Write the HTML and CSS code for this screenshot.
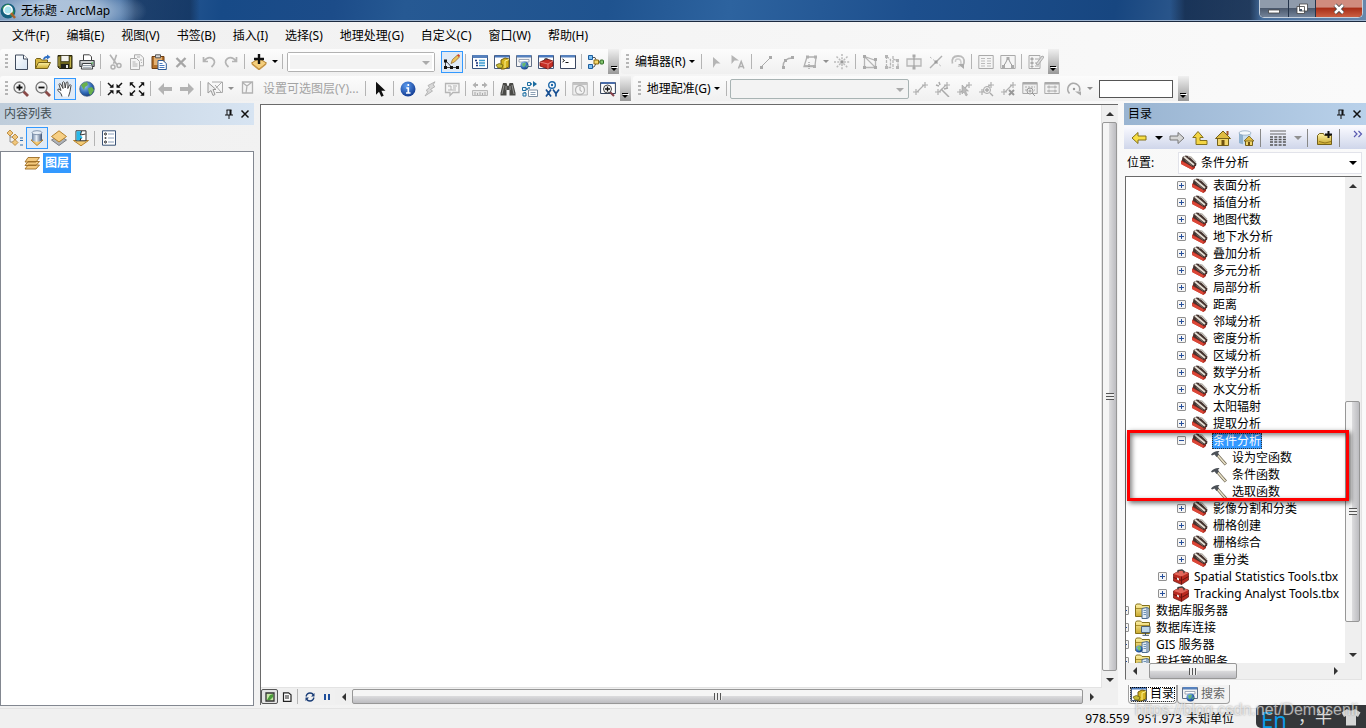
FILE: index.html
```html
<!DOCTYPE html>
<html lang="zh-CN">
<head>
<meta charset="utf-8">
<title>无标题 - ArcMap</title>
<link rel="stylesheet" href="styles.css">
</head>
<body>
<svg class="sprite" aria-hidden="true">
  <defs>
    <linearGradient id="g-gold" x1="0" y1="0" x2="0" y2="1"><stop offset="0" stop-color="#fff3a8"/><stop offset="1" stop-color="#c9a82c"/></linearGradient>
    <linearGradient id="g-page" x1="0" y1="0" x2="1" y2="1"><stop offset="0" stop-color="#fff"/><stop offset="1" stop-color="#d3e2f2"/></linearGradient>
    <linearGradient id="g-cyl" x1="0" y1="0" x2="1" y2="0"><stop offset="0" stop-color="#6d84a4"/><stop offset=".45" stop-color="#e6eef8"/><stop offset="1" stop-color="#3d5274"/></linearGradient>
    <radialGradient id="g-blue" cx=".4" cy=".3" r=".8"><stop offset="0" stop-color="#5b9cf0"/><stop offset="1" stop-color="#0a2f86"/></radialGradient>
    <radialGradient id="g-globe" cx=".35" cy=".3" r=".8"><stop offset="0" stop-color="#9cc8f4"/><stop offset=".6" stop-color="#2c66b4"/><stop offset="1" stop-color="#12346e"/></radialGradient>
  </defs>
  <symbol id="app" viewBox="0 0 16 16"><circle cx="8" cy="8" r="7.500" fill="#15607e"/><path d="M2 5q3-4 7-4 1 3-2 4l-3 4zM10 10l4-3q1 4-3 7z" fill="#2f8f4e"/><circle cx="8" cy="7" r="4.200" fill="#a8e4ee" stroke="#fff" stroke-width="1.400"/><path d="M11 10l4 5" stroke="#a8622c" stroke-width="2.400"/></symbol>
  <symbol id="new" viewBox="0 0 16 16"><path d="M2.500 1h8l4 4v10.500h-12z" fill="url(#g-page)" stroke="#3f4a5c"/><path d="M10.500 1v4h4" fill="#fff" stroke="#3f4a5c"/></symbol>
  <symbol id="open" viewBox="0 0 16 16"><path d="M.5 14.500V5.500l1-1h4l1 1.500h6V8" fill="#d8b840" stroke="#75611a"/><path d="M.5 14.500l3-6h12l-3 6z" fill="url(#g-gold)" stroke="#75611a"/><path d="M8 5q1-3 4-3V.5l3.500 2.500-3.500 2.500V4q-2 0-3 2z" fill="#2e6fc4"/></symbol>
  <symbol id="save" viewBox="0 0 16 16"><path d="M1 1.500h14v13H2.500L1 13z" fill="#6d651e" stroke="#29240c"/><path d="M4 1.500h8v6H4z" fill="#f3f3ee" stroke="#29240c" stroke-width=".6"/><path d="M4 10h8v4.500H4z" fill="#23231c"/><path d="M9 11h2v3H9z" fill="#e8e8e8"/><path d="M2 3v9M13.500 3v10" stroke="#c2b34c"/></symbol>
  <symbol id="print" viewBox="0 0 16 16"><path d="M4.500 6V.8h6l2 2V6" fill="#fff" stroke="#444"/><path d="M.8 6.500h14.400v6H.8z" fill="#a9aeb2" stroke="#3b3f42"/><path d="M2 8h12" stroke="#eee"/><path d="M3.500 9.500h9l1.200 5.500H2.300z" fill="#fff" stroke="#3b3f42"/><path d="M4 11.500h8M4 13.300h8" stroke="#7b8a99" stroke-width=".8"/><path d="M12.500 9h1.500" stroke="#3c3"/></symbol>
  <symbol id="cut" viewBox="0 0 16 16"><path d="M3 .8l7 10M9.500.8l-3 9" stroke="#b2b2b2" stroke-width="1.600" fill="none"/><circle cx="6" cy="13" r="2" fill="none" stroke="#b2b2b2" stroke-width="1.500"/><circle cx="12" cy="11.500" r="2" fill="none" stroke="#b2b2b2" stroke-width="1.500"/></symbol>
  <symbol id="copy" viewBox="0 0 16 16"><path d="M5.500.8h6l3 3v8h-9z" fill="#f3f3f3" stroke="#aaa"/><path d="M1.500 4.500h6l3 3v8h-9z" fill="#f3f3f3" stroke="#aaa"/><path d="M3.500 8h3M3.500 10h5M3.500 12h5M8 3h3M11 6h2M12 8.500h1" stroke="#b2b2b2"/></symbol>
  <symbol id="paste" viewBox="0 0 16 16"><path d="M1 2.500h12v12H1z" fill="#b5722c" stroke="#6e3d10"/><path d="M3 3h8v8H3z" fill="#e3b072"/><path d="M4.500.8h5v3h-5z" fill="#d9d9d9" stroke="#555"/><path d="M7 6.500h5l3.300 3v6H7z" fill="#fff" stroke="#2c5a94"/><path d="M8.500 9.500h3M8.500 11.500h5M8.500 13.500h5" stroke="#4a7cc0"/></symbol>
  <symbol id="del" viewBox="0 0 16 16"><path d="M3.500 4l9 9M12.500 4l-9 9" stroke="#a6a6a6" stroke-width="2.400"/></symbol>
  <symbol id="undo" viewBox="0 0 16 16"><path d="M2.500 3v4.500H7M3 7q4-5 8.500-2.500Q16 8 10.500 13" fill="none" stroke="#b4b4b4" stroke-width="1.700"/></symbol>
  <symbol id="redo" viewBox="0 0 16 16"><path d="M13.500 3v4.500H9M13 7q-4-5-8.500-2.500Q0 8 5.500 13" fill="none" stroke="#b4b4b4" stroke-width="1.700"/></symbol>
  <symbol id="adddata" viewBox="0 0 16 16"><path d="M.5 9L8 4.500 15.500 9 8 15.500z" fill="#f4ce7c" stroke="#b5812c"/><path d="M1 10l7 5.500L15 10" fill="none" stroke="#c79648" stroke-width="1.500"/><path d="M8 0v10M3 5h10" stroke="#111" stroke-width="2.400"/></symbol>
  <symbol id="edit" viewBox="0 0 16 16"><path d="M1.500 7v6.500h12M2 7l5.500 6" fill="none" stroke="#333" stroke-width=".9"/><path d="M0 5.500h3v3H0zM0 12h3v3H0zM6 12h3v3H6zM12 12h3v3h-3z" fill="#111"/><path d="M7 9.500l1.500-4 5-4.500 2 2-5 5z" fill="#efc35a" stroke="#87632a" stroke-width=".7"/><path d="M13 1.500L14.500 0 16 1.500 15 3z" fill="#d0442c"/></symbol>
  <symbol id="toc" viewBox="0 0 16 16"><path d="M.5 1.500h15v13H.5z" fill="#fff" stroke="#36527f"/><path d="M.5 1h15v3H.5z" fill="#5681bd"/><path d="M3 6.500h2M4 9h2M4 11.500h2" stroke="#16327c" stroke-width="1.500"/><path d="M7 6.500h6M7 9h6M7 11.500h6" stroke="#3d9ad0" stroke-width="1.300"/></symbol>
  <symbol id="catalog" viewBox="0 0 16 16"><path d="M.5 1.500h15v13H.5z" fill="#fff" stroke="#46587a"/><path d="M1 1.500h14v2H1z" fill="#4978bd"/><path d="M7 6l4-2 4 1v8l-5 2H7z" fill="#d5b421" stroke="#715b0a"/><path d="M11 7l4-1.500M11 7v7" stroke="#fff38d"/><path d="M2 11q3-3 7 0l-1 3H4z" fill="#c6bb35" stroke="#5f560f" stroke-width=".7"/></symbol>
  <symbol id="search" viewBox="0 0 16 16"><path d="M.5 1.500h15v11H.5z" fill="#f4f4f4" stroke="#637086"/><path d="M1 1h14v2.500H1z" fill="#5681bd"/><path d="M3 5.500h10v2.500H3z" fill="#fff" stroke="#8b96a6" stroke-width=".8"/><circle cx="8.500" cy="11.500" r="4" fill="url(#g-globe)"/><path d="M6 9.500l4-1-1 3.500-2 1zM10 12l2-1-1 3z" fill="#65b76c"/></symbol>
  <symbol id="toolboxwin" viewBox="0 0 16 16"><path d="M.5 1.500h15v13H.5z" fill="#fff" stroke="#46587a"/><path d="M1 1h14v2.500H1z" fill="#4978bd"/><path d="M2 8l7-3 6 2v5l-5 3-8-3z" fill="#c52f26" stroke="#6b120d" stroke-width=".8"/><path d="M2 8l8 2 5-3M10 10v5" fill="none" stroke="#f0968f" stroke-width=".8"/><path d="M6 5.500q2-2 4 0" fill="none" stroke="#333"/></symbol>
  <symbol id="python" viewBox="0 0 16 16"><path d="M.5 1.500h15v13H.5z" fill="#fff" stroke="#3a4660"/><path d="M1 1h14v2.500H1z" fill="#5681bd"/><path d="M2.500 5l2 1.500-2 1.500M5.500 8.500h3" fill="none" stroke="#111"/></symbol>
  <symbol id="model" viewBox="0 0 16 16"><path d="M4 3.500h3l2 4.500h3M4 13h2l3-5" fill="none" stroke="#555"/><path d="M.5 1.500h4v4h-4zM.5 10.500h4v4h-4z" fill="#7fc2f4" stroke="#1d5d9c"/><path d="M6 6h4.500v4H6z" fill="#f5d76a" stroke="#8c6a14"/><rect x="12" y="6" width="3.500" height="4" rx="1" fill="#84c470" stroke="#2f6a22"/></symbol>
  <symbol id="zoomin" viewBox="0 0 16 16"><path d="M10 10l5 5" stroke="#8a4a48" stroke-width="2.800"/><circle cx="6.500" cy="6.500" r="5.500" fill="#f2f2f2" stroke="#777" stroke-width="1.300"/><path d="M6.500 3.500v6M3.500 6.500h6" stroke="#111" stroke-width="1.800"/></symbol>
  <symbol id="zoomout" viewBox="0 0 16 16"><path d="M10 10l5 5" stroke="#8a4a48" stroke-width="2.800"/><circle cx="6.500" cy="6.500" r="5.500" fill="#f2f2f2" stroke="#777" stroke-width="1.300"/><path d="M3.500 6.500h6" stroke="#111" stroke-width="1.800"/></symbol>
  <symbol id="pan" viewBox="0 0 16 16"><path d="M5 15.500L4 12.500.8 9.500Q.3 8 2 8l2 1.500L2 3.500Q2.500 2 3.600 3L6 7.500 5.500 1.500Q6.500 0 7.500 1.500l.7 5.500 1-5.500q1-1.200 1.800 0L10.800 7.500 12.500 4q1-.8 1.500.3L13 10.500l-1.500 5" fill="#fff" stroke="#333" stroke-width=".9"/></symbol>
  <symbol id="globe" viewBox="0 0 16 16"><circle cx="8" cy="8" r="7.300" fill="url(#g-globe)" stroke="#3c5a84" stroke-width=".7"/><path d="M2 4q3-3 6-3l1 3-3 2-1 3zM9 7l4-1 2 3-3 5-2-1z" fill="#69b04c"/></symbol>
  <symbol id="fixin" viewBox="0 0 16 16"><path d="M1 2l4 4M15 2l-4 4M1 14l4-4M15 14l-4-4" stroke="#111" stroke-width="1.500"/><path d="M6.500 6.800H2.500l4-4zM9.500 6.800v-4l4 4zM6.500 9.200v4l-4-4zM9.500 9.200h4l-4 4z" fill="#111"/></symbol>
  <symbol id="fixout" viewBox="0 0 16 16"><path d="M2 2.500l4 4M14 2.500l-4 4M2 13.500l4-4M14 13.500l-4-4" stroke="#111" stroke-width="1.500"/><path d="M.8 1.300h4l-4 4zM15.200 1.300v4l-4-4zM.8 14.700v-4l4 4zM15.200 14.700h-4l4-4z" fill="#111"/></symbol>
  <symbol id="back" viewBox="0 0 16 16"><path d="M1 8l6-6v4h8v4H7v4z" fill="#b3b3b3"/></symbol>
  <symbol id="fwd" viewBox="0 0 16 16"><path d="M15 8L9 2v4H1v4h8v4z" fill="#b3b3b3"/></symbol>
  <symbol id="selfeat" viewBox="0 0 16 16"><path d="M5 1h10.500v10.500H9M9 7l6-6M8 4l6 7" fill="none" stroke="#aaa"/><path d="M1 1.500l8 7H6l2 5-2 1-2-5-3 2.500z" fill="#eee" stroke="#999"/></symbol>
  <symbol id="clearsel" viewBox="0 0 16 16"><path d="M3.500 1h10v11h-10zM4 2l4 3 5-4M8 5l-1 7" fill="#f4f4f4" stroke="#b2b2b2" stroke-width="1.300"/></symbol>
  <symbol id="arrow" viewBox="0 0 16 16"><path d="M4 .8v13l3-3 2.300 5 2.400-1-2.300-5H13.500z" fill="#111"/></symbol>
  <symbol id="info" viewBox="0 0 16 16"><circle cx="8" cy="8" r="7.500" fill="url(#g-blue)"/><path d="M8.300 3v2M6.300 7h2v5M6 12h4.500" fill="none" stroke="#fff" stroke-width="1.700"/></symbol>
  <symbol id="bolt" viewBox="0 0 16 16"><path d="M13 .8L6 4.500l1.500 2-3.500 3 2 1L3 15l7.500-5-2-1.500 4.500-3-2-1.500z" fill="#d8d8d8" stroke="#b0b0b0" stroke-width=".9"/></symbol>
  <symbol id="popup" viewBox="0 0 16 16"><path d="M1.500 2.500h13.500v9h-6l-3 3v-3h-4.500z" fill="#f6f6f6" stroke="#b5b5b5" stroke-width="1.300"/><path d="M4 5h3v4H4M9 5h4M9 7h3M7 9h5" fill="none" stroke="#b5b5b5"/></symbol>
  <symbol id="measure" viewBox="0 0 16 16"><path d="M.5 4L4 1v2h2v2H4v2zM15.500 4L12 1v2h-2v2h2v2z" fill="#b0b0b0"/><path d="M.5 9.500h15v5H.5z" fill="#e6e6e6" stroke="#b8b8b8"/><path d="M3 11v3M5.500 12v2M8 11v3M10.500 12v2M13 11v3" stroke="#aaa"/></symbol>
  <symbol id="find" viewBox="0 0 16 16"><path d="M3 2h3.500l1 3h1l1-3H13l2.500 10v2.500h-6V9h-3v5.500h-6V12z" fill="#4a4a46"/><path d="M4 4L2 13M12 4l2 9M6 5v4M10 5v4" stroke="#aaa" stroke-width=".8"/></symbol>
  <symbol id="route" viewBox="0 0 16 16"><path d="M3 13V8h4V3h6" fill="none" stroke="#1b6ca0" stroke-width="1.300" stroke-dasharray="2 1"/><path d="M11 0l4 3-4 3z" fill="#1b6ca0"/><path d="M.5 6.500H4v3H.5zM5.500 1.500h3v3h-3zM1 12h3v3H1z" fill="#eaf4fa" stroke="#1b6ca0"/><path d="M6.500 9h9v6.500h-9z" fill="#fff" stroke="#7c8ea0"/><path d="M8.500 11.500h5M8.500 13.500h5" stroke="#8ba0b5"/></symbol>
  <symbol id="xy" viewBox="0 0 16 16"><circle cx="8" cy="4" r="3.300" fill="#fff" stroke="#1d67a8" stroke-width="1.400"/><circle cx="8" cy="4" r="1.200" fill="#1d67a8"/><path d="M2 8.500l5 7M7 8.500l-5 7M9 8.500l3 4 3-4M12 12v3.500" fill="none" stroke="#174f92" stroke-width="1.700"/></symbol>
  <symbol id="time" viewBox="0 0 16 16"><path d="M.8 1.500h14.500v12.500H.8z" fill="#eee" stroke="#bbb"/><path d="M1 2h14v2H1z" fill="#c3c3c3"/><circle cx="8" cy="9" r="4.500" fill="#f4f4f4" stroke="#b6b6b6" stroke-width="1.300"/><path d="M8 6v3.500l2 1" fill="none" stroke="#aaa"/></symbol>
  <symbol id="viewer" viewBox="0 0 16 16"><path d="M.6 1.500h14.800v11H.6z" fill="#fff" stroke="#33415a"/><path d="M1 1h14v2H1z" fill="#4a6ca8"/><path d="M10 11l4 4" stroke="#85404a" stroke-width="2"/><circle cx="7.500" cy="8" r="4" fill="#f4f4f4" stroke="#444"/><path d="M7.500 5.500v5M5 8h5" stroke="#111" stroke-width="1.300"/></symbol>
  <symbol id="earrow" viewBox="0 0 16 16"><path d="M5 3v11l3-4.500h4.500z" fill="#b5b5b5"/></symbol>
  <symbol id="earrowa" viewBox="0 0 16 16"><path d="M1.500 1v9l3-3.500h4.500z" fill="#b5b5b5"/><path d="M8.500 14.500l2.700-7 2.700 7M9.500 12.500h3.500" fill="none" stroke="#b0b0b0" stroke-width="1.500"/></symbol>
  <symbol id="line" viewBox="0 0 16 16"><path d="M3 13L13 3" stroke="#aaa"/><path d="M2 12h3v3H2zM11 2h3v3h-3z" fill="#aaa"/></symbol>
  <symbol id="arc" viewBox="0 0 16 16"><path d="M3 13Q3 4 13 4" fill="none" stroke="#b0b0b0" stroke-width="1.300"/><path d="M2 12h3v3H2zM4 5h3v3H4zM11 2h3v3h-3z" fill="#aaa"/></symbol>
  <symbol id="trace" viewBox="0 0 16 16"><path d="M5 3h9l-1 9M5 3L2 12.500h9" fill="none" stroke="#b0b0b0" stroke-width="1.300"/><path d="M4 1.500h3v3H4zM12 1.500h3v3h-3zM11 11h3v3h-3z" fill="#b0b0b0"/><path d="M7 8v7M3.500 11.500h7" stroke="#888" stroke-dasharray="1 1"/></symbol>
  <symbol id="point" viewBox="0 0 16 16"><path d="M8 0v16M0 8h16M2.500 2.500l11 11M13.500 2.500l-11 11" stroke="#bbb" stroke-width="1.500" stroke-dasharray="2 1.300"/><path d="M6.500 6.500h3v3h-3z" fill="#999"/></symbol>
  <symbol id="vertices" viewBox="0 0 16 16"><path d="M2.500 2.500v11h11zM2.500 2.500l11 4v7" fill="none" stroke="#b6b6b6" stroke-width="1.300"/><path d="M1 1h3v3H1zM1 12h3v3H1zM12 12h3v3h-3zM12 4h3v3h-3z" fill="#aaa"/></symbol>
  <symbol id="reshape" viewBox="0 0 16 16"><path d="M2.500 2v12M2.500 2.500l4 3v8H2M9 2v13M9 5l5 2v6" fill="none" stroke="#b6b6b6" stroke-width="1.300" stroke-dasharray="3 1"/><path d="M1 1h3v3H1zM1 12h3v3H1zM12 5h3v3h-3zM12 12h3v3h-3z" fill="#b5b5b5"/></symbol>
  <symbol id="cutpoly" viewBox="0 0 16 16"><path d="M1 5h14v7H1z" fill="#eee" stroke="#b5b5b5" stroke-width="1.300"/><path d="M8 2v12" stroke="#999"/><path d="M6.500.500h3v3h-3zM6.500 12.500h3v3h-3z" fill="#aaa"/></symbol>
  <symbol id="split" viewBox="0 0 16 16"><path d="M2 14L14 2" stroke="#b0b0b0" stroke-width="1.400"/><path d="M2 3l12 10" stroke="#bbb" stroke-dasharray="2 2"/><path d="M6.500 6.500h3v3h-3z" fill="#999"/></symbol>
  <symbol id="rotate" viewBox="0 0 16 16"><path d="M2.500 9.500Q1 2 8 2t6 7l-2 4" fill="none" stroke="#bbb" stroke-width="1.800"/><path d="M5.500 8Q5 5 8 5t3 4-3 3" fill="none" stroke="#ccc" stroke-width="1.500"/><path d="M8 10h6v5z" fill="#aaa"/></symbol>
  <symbol id="attr" viewBox="0 0 16 16"><path d="M.8 1.500h14.400v13H.8z" fill="#f5f5f5" stroke="#aaa"/><path d="M3 4.500h4M3 7h4M3 9.500h4M3 12h4M9 4.500h4M9 7h4M9 9.500h4M9 12h4" stroke="#bbb"/></symbol>
  <symbol id="sketch" viewBox="0 0 16 16"><path d="M.8 1.500h14.400v13H.8z" fill="#f5f5f5" stroke="#aaa"/><path d="M3.500 12l2-3 2.500-5 2.500 5 2 3" fill="none" stroke="#999"/><path d="M2 11h3v3H2zM11 11h3v3h-3zM6.500 3h3v3h-3z" fill="#aaa"/></symbol>
  <symbol id="create" viewBox="0 0 16 16"><path d="M1 1.500h11v13H1z" fill="#f5f5f5" stroke="#aaa"/><path d="M3 4h2v2H3zM3 8h2v2H3zM3 12h2v1H3zM7 5h4M7 9h2M7 12h4" fill="#aaa" stroke="#aaa"/><path d="M8 10l6-8 2 1-6 8z" fill="#ddd" stroke="#aaa"/></symbol>
  <symbol id="link" viewBox="0 0 16 16"><path d="M1 11h6M4 8v6M10 4h6M13 1v6M5 11l7-7" fill="none" stroke="#b0b0b0" stroke-width="1.200"/></symbol>
  <symbol id="linkwand" viewBox="0 0 16 16"><use href="#link"/><path d="M7 8l8 8M2 4l3 1M5 1l1 3M10 8l4-1" stroke="#aaa" stroke-width="1.500"/></symbol>
  <symbol id="linksel" viewBox="0 0 16 16"><use href="#link"/><path d="M6 4v9l2-2 2 4 1.500-1-2-4h3z" fill="#bbb" stroke="#999" stroke-width=".5"/></symbol>
  <symbol id="linkzoom" viewBox="0 0 16 16"><use href="#link"/><circle cx="9" cy="9" r="3.500" fill="#eee" stroke="#aaa"/><path d="M12 12l3 3M7 9h4M9 7v4" stroke="#aaa" stroke-width="1.400"/></symbol>
  <symbol id="linkdel" viewBox="0 0 16 16"><use href="#link"/><path d="M9 9l5 5M14 9l-5 5" stroke="#999" stroke-width="2"/></symbol>
  <symbol id="table" viewBox="0 0 16 16"><path d="M.8 1.500h14.400v11H.8z" fill="#eee" stroke="#aaa"/><path d="M1 2.500h14" stroke="#aaa" stroke-width="2"/><path d="M3 6h10M3 9h10" stroke="#aaa" stroke-dasharray="2 1"/><circle cx="8" cy="10" r="3" fill="#eee" stroke="#999"/><path d="M10 12l3 3M6.500 10h3M8 8.500v3" stroke="#999"/></symbol>
  <symbol id="table2" viewBox="0 0 16 16"><path d="M.8 1.500h14.400v11H.8z" fill="#f1f1f1" stroke="#aaa"/><path d="M1 2.500h14" stroke="#aaa" stroke-width="2"/><path d="M3 6h10M3 10h10M5 4.500v3M11 4.500v3M5 8.500v3M11 8.500v3" stroke="#aaa"/></symbol>
  <symbol id="georot" viewBox="0 0 16 16"><path d="M3.500 12.500A6 6 0 1 1 13.500 10" fill="none" stroke="#aaa" stroke-width="1.700"/><circle cx="8" cy="8" r="1.200" fill="#999"/><path d="M9 10.500h6v4z" fill="#aaa"/></symbol>
  <symbol id="l-order" viewBox="0 0 16 16"><path d="M3 3v9h6M3 7h5" fill="none" stroke="#777" stroke-width=".8"/><path d="M0 3l3-3 3 3-3 3zM5 7l3-3 3 3-3 3zM5 12.500l3-3 3 3-3 3z" fill="#f1c77c" stroke="#b37e2f" stroke-width=".8"/><path d="M13 8h3M13 10.500h3M13 15h3" stroke="#2f6fb0"/></symbol>
  <symbol id="l-source" viewBox="0 0 16 16"><path d="M2 10l6 5.500 6-5.500z" fill="#f4cb74" stroke="#b5812c"/><path d="M3 2.500v8q5 2.500 10 0v-8z" fill="url(#g-cyl)"/><ellipse cx="8" cy="2.700" rx="5" ry="2" fill="#e7eef7" stroke="#5d7390" stroke-width=".7"/></symbol>
  <symbol id="l-vis" viewBox="0 0 16 16"><path d="M.5 10L8 5.500l7.500 4.500L8 15.500z" fill="#aeb2b8" stroke="#7c7f84"/><path d="M.5 6.500L8 .8l7.500 5.700L8 12z" fill="#f6cf84" stroke="#b5812c"/></symbol>
  <symbol id="l-sel" viewBox="0 0 16 16"><path d="M.5 10.500h15L8 15.800z" fill="#f4cb74" stroke="#b5812c"/><path d="M3 .8h10v10H3z" fill="#fff" stroke="#333"/><path d="M3.500 1.300h5l-1 4 2 2-2 3h-4z" fill="#29b8e8"/><path d="M8.500 1l-1 4 5-1M8 8l-1 3" stroke="#333" fill="none"/></symbol>
  <symbol id="l-opt" viewBox="0 0 16 16"><path d="M1.500.8h13v14.400h-13z" fill="#fff" stroke="#3b5478"/><circle cx="4.500" cy="4" r="1" fill="none" stroke="#222"/><circle cx="4.500" cy="8" r="1" fill="#444"/><circle cx="4.500" cy="12" r="1" fill="none" stroke="#222"/><path d="M7 4h6M7 8h6M7 12h6" stroke="#8da1bb"/></symbol>
  <symbol id="layers" viewBox="0 0 16 16"><path d="M1 14l3-4h11.500l-3.500 4zM1 10.500l3-4h11.500L12 10.500zM1 7l3-4.500h11.500L12 7z" fill="#f5ca7e" stroke="#9c6c24" stroke-width=".9"/></symbol>
  <symbol id="pin" viewBox="0 0 10 10"><path d="M2.500 1h5M3 1v5M1 6h8M5 6v4" fill="none" stroke="currentColor"/><path d="M6.500 1v5" stroke="currentColor" stroke-width="2"/></symbol>
  <symbol id="close" viewBox="0 0 10 10"><path d="M1.500 1.500l7 7M8.500 1.500l-7 7" stroke="currentColor" stroke-width="1.500"/></symbol>
  <symbol id="c-back" viewBox="0 0 16 16"><path d="M1 8l6-5.500V6h8v4H7v3.500z" fill="#f8df45" stroke="#84701a"/></symbol>
  <symbol id="c-fwd" viewBox="0 0 16 16"><path d="M15 8L9 2.500V6H1v4h8v3.500z" fill="#d6d6d6" stroke="#777"/></symbol>
  <symbol id="c-up" viewBox="0 0 16 16"><path d="M6 1.500L.8 7.500H4v7h11v-4H8v-3h3.200z" fill="#f3d544" stroke="#84701a"/></symbol>
  <symbol id="c-home" viewBox="0 0 16 16"><path d="M2.500 8h11v7.500h-11z" fill="#f1d56a" stroke="#75611a"/><path d="M11.500 1h2v4h-2z" fill="#a0522d"/><path d="M.5 8.500L8 1l7.500 7.500z" fill="#dfbb43" stroke="#75611a"/><path d="M6.500 10h3v5.500h-3z" fill="#6e5110"/></symbol>
  <symbol id="c-db" viewBox="0 0 16 16"><path d="M1 3v10q6 3 12 0V3z" fill="#c9dded"/><path d="M1 3v10q2 1 4 1.300V3z" fill="#8fb2cf"/><ellipse cx="7" cy="3" rx="6" ry="2.200" fill="#f3f8fc" stroke="#87a1b8" stroke-width=".7"/><path d="M7.500 10.500h7v5h-7z" fill="#f1d56a" stroke="#75611a"/><path d="M6 11l5-5 5 5z" fill="#dfbb43" stroke="#75611a" stroke-width=".8"/><path d="M10 12h2v3.500h-2z" fill="#6e5110"/></symbol>
  <symbol id="c-view" viewBox="0 0 16 16"><path d="M0 1h16M0 4h16" stroke="#666"/><path d="M0 7h16M0 9.500h16M0 12h16M0 15h16" stroke="#555" stroke-width="1.300" stroke-dasharray="3 1.300"/></symbol>
  <symbol id="c-conn" viewBox="0 0 16 16"><path d="M.5 14.500V5.500l2-2h4l1 2h7v9z" fill="url(#g-gold)" stroke="#75611a"/><path d="M2 11.500q6 3 12 0" fill="none" stroke="#94771a"/><path d="M11.500 1v7M8 4.500h7" stroke="#111" stroke-width="2"/></symbol>
  <symbol id="toolset" viewBox="0 0 16 16"><path d="M0 6l2.500-2L14 10.500V13l-2.500 2L.3 9z" fill="#a52a20"/><path d="M0 6l11.500 5.800V15L.3 9.200z" fill="#dc4636"/><path d="M.8 5.500L1.500 2l3-1.500 3 .5 8 7.500-.5 2.500-3.500 1z" fill="#45332f"/><path d="M3 1.800L13 10" stroke="#e4dfd4" stroke-width="1.800"/><path d="M7 1.500l3 .5 5 5.500" fill="none" stroke="#b3aea6" stroke-width="1.300"/><path d="M4.500 5.500l6.500 5" stroke="#7a6f68"/></symbol>
  <symbol id="toolbox" viewBox="0 0 16 16"><path d="M.5 5L7 1.500l8.500 2.500v7L8.500 15.500.5 12z" fill="#b92a20" stroke="#641510" stroke-width=".7"/><path d="M.5 5L7 1.500 15.500 4 8.500 7.500z" fill="#e2665a"/><path d="M8.500 7.500v8M.5 8.500l8 3 7-4" fill="none" stroke="#6b130e"/><path d="M5 3.500V1.500L9 .8l2 1.500v2" fill="none" stroke="#333" stroke-width="1.200"/><path d="M4 8.500l2 1v2l-2-1z" fill="#eee"/></symbol>
  <symbol id="hammer" viewBox="0 0 16 16"><path d="M6 4.500l8.800 10" stroke="#6e6653" stroke-width="3"/><path d="M6.500 5l8 9.200" stroke="#e9e2c8" stroke-width="1.600"/><path d="M0 4.500Q3 .5 8.500 1L7 3l1 1.500L5.500 7 3.500 4.500 1 5.500z" fill="#4c5157"/></symbol>
  <symbol id="folder" viewBox="0 0 16 16"><path d="M.5 13.500V2.500l1-1.500h4l1.500 1.500h7.500v11z" fill="url(#g-gold)" stroke="#84701a"/><path d="M1 5.500h13" stroke="#a98f2c"/></symbol>
  <symbol id="f-server" viewBox="0 0 16 16"><use href="#folder"/><path d="M7 5.500l5-1 2 1v9l-2 1H7z" fill="#e3edf6" stroke="#4e6d8e"/><path d="M12 5v10" stroke="#4e6d8e"/><path d="M8.500 7.500H11M8.500 9.500H11M8.500 11.500H11" stroke="#6f94b8"/></symbol>
  <symbol id="f-conn" viewBox="0 0 16 16"><use href="#folder"/><path d="M6.500 6.500h8.500v6H6.500z" fill="#bcd6ea" stroke="#4e6072"/><path d="M10.500 13v2M7.500 15.300h6.500" stroke="#3e4f60"/></symbol>
  <symbol id="f-gis" viewBox="0 0 16 16"><use href="#f-server"/><circle cx="4" cy="12" r="3.500" fill="url(#g-globe)"/><path d="M2 10l3-1 1 3-2 2z" fill="#76c466"/></symbol>
  <symbol id="v-data" viewBox="0 0 10 10"><path d="M1 1h8v8H1z" fill="#c9e8a8" stroke="#333" stroke-width="1.300"/><path d="M2 8l3-5 3-1v3L5 8z" fill="#4b9c3a"/></symbol>
  <symbol id="v-layout" viewBox="0 0 10 10"><path d="M1.500.8h5l2.500 2v6.500H1.500z" fill="#fff" stroke="#222" stroke-width="1.200"/><path d="M3 4h4M3 6h4" stroke="#222" stroke-width="1.200"/></symbol>
  <symbol id="refresh" viewBox="0 0 10 10"><path d="M1 4.500Q2 1 5 1t3.500 2.500M9 5.500Q8 9 5 9T1.500 6.500" fill="none" stroke="#1c3f78" stroke-width="1.300"/><path d="M9.500 1v3.500H6zM.5 9V5.500H4z" fill="#1c3f78"/></symbol>
  <symbol id="pause" viewBox="0 0 10 10"><path d="M2 2h2v6H2zM6 2h2v6H6z" fill="#1f4f9c"/></symbol>
  <symbol id="shirt" viewBox="0 0 20 18"><path d="M6 1q4 3 8 0l5.500 3.500L17 9l-2-1v9.500H5V8L3 9 .5 4.500z" fill="#d6d6d6"/></symbol>
</svg>

<div class="app">
  <header class="titlebar">
    <svg class="icon"><use href="#app"/></svg>
    <h1 class="title-text">无标题 - ArcMap</h1>
    <div class="winbtns">
      <button class="winbtn" aria-label="最小化"><svg viewBox="0 0 16 12"><path d="M2.500 7h11v3h-11z" fill="#fff" stroke="#444" stroke-width=".8"/></svg></button>
      <button class="winbtn" aria-label="还原"><svg viewBox="0 0 16 12"><path d="M5.500 1h8v7h-8zM3 3.500h7.500v7H3z" fill="#fff" stroke="#444" stroke-width=".8"/><path d="M5.500 6h2.500v2H5.500z" fill="#456"/></svg></button>
      <button class="winbtn winclose" aria-label="关闭"><svg viewBox="0 0 16 12"><path d="M4 2l8 8M12 2l-8 8" stroke="#444" stroke-width="4"/><path d="M4 2l8 8M12 2l-8 8" stroke="#fff" stroke-width="2.500"/></svg></button>
    </div>
  </header>

  <nav class="menubar">
    <button>文件(F)</button><button>编辑(E)</button><button>视图(V)</button><button>书签(B)</button><button>插入(I)</button><button>选择(S)</button><button>地理处理(G)</button><button>自定义(C)</button><button>窗口(W)</button><button>帮助(H)</button>
  </nav>

  <div class="toolrow">
    <div class="toolbar">
      <i class="grip"></i>
      <button class="tb" aria-label="新建"><svg class="icon"><use href="#new"/></svg></button>
      <button class="tb" aria-label="打开"><svg class="icon"><use href="#open"/></svg></button>
      <button class="tb" aria-label="保存"><svg class="icon"><use href="#save"/></svg></button>
      <button class="tb" aria-label="打印"><svg class="icon"><use href="#print"/></svg></button>
      <i class="sep"></i>
      <button class="tb" aria-label="剪切" disabled><svg class="icon"><use href="#cut"/></svg></button>
      <button class="tb" aria-label="复制" disabled><svg class="icon"><use href="#copy"/></svg></button>
      <button class="tb" aria-label="粘贴"><svg class="icon"><use href="#paste"/></svg></button>
      <button class="tb" aria-label="删除" disabled><svg class="icon"><use href="#del"/></svg></button>
      <i class="sep"></i>
      <button class="tb" aria-label="撤消" disabled><svg class="icon"><use href="#undo"/></svg></button>
      <button class="tb" aria-label="恢复" disabled><svg class="icon"><use href="#redo"/></svg></button>
      <i class="sep"></i>
      <button class="tb" aria-label="添加数据"><svg class="icon"><use href="#adddata"/></svg></button>
      <button class="drop" aria-label="添加数据选项"></button>
      <i class="sep"></i>
      <span class="combo combo-scale"><select aria-label="比例尺" disabled><option></option></select></span>
      <button class="tb tb-on" aria-label="编辑器工具条"><svg class="icon"><use href="#edit"/></svg></button>
      <i class="sep"></i>
      <button class="tb" aria-label="内容列表"><svg class="icon"><use href="#toc"/></svg></button>
      <button class="tb" aria-label="目录"><svg class="icon"><use href="#catalog"/></svg></button>
      <button class="tb" aria-label="搜索"><svg class="icon"><use href="#search"/></svg></button>
      <button class="tb" aria-label="工具箱"><svg class="icon"><use href="#toolboxwin"/></svg></button>
      <button class="tb" aria-label="Python"><svg class="icon"><use href="#python"/></svg></button>
      <i class="sep"></i>
      <button class="tb" aria-label="模型构建器"><svg class="icon"><use href="#model"/></svg></button>
      <button class="more" aria-label="工具条选项"></button>
    </div>
    <div class="toolbar">
      <i class="grip"></i>
      <button class="tmenu">编辑器(R)</button>
      <i class="sep"></i>
      <button class="tb" aria-label="编辑工具" disabled><svg class="icon"><use href="#earrow"/></svg></button>
      <button class="tb" aria-label="编辑注记" disabled><svg class="icon"><use href="#earrowa"/></svg></button>
      <i class="sep"></i>
      <button class="tb" aria-label="直线段" disabled><svg class="icon"><use href="#line"/></svg></button>
      <button class="tb" aria-label="弧段" disabled><svg class="icon"><use href="#arc"/></svg></button>
      <button class="tb" aria-label="追踪" disabled><svg class="icon"><use href="#trace"/></svg></button>
      <button class="drop drop-off" aria-label="追踪选项" disabled></button>
      <button class="tb" aria-label="点" disabled><svg class="icon"><use href="#point"/></svg></button>
      <i class="sep"></i>
      <button class="tb" aria-label="编辑折点" disabled><svg class="icon"><use href="#vertices"/></svg></button>
      <button class="tb" aria-label="整形" disabled><svg class="icon"><use href="#reshape"/></svg></button>
      <button class="tb" aria-label="裁剪面" disabled><svg class="icon"><use href="#cutpoly"/></svg></button>
      <button class="tb" aria-label="分割" disabled><svg class="icon"><use href="#split"/></svg></button>
      <button class="tb" aria-label="旋转" disabled><svg class="icon"><use href="#rotate"/></svg></button>
      <i class="sep"></i>
      <button class="tb" aria-label="属性" disabled><svg class="icon"><use href="#attr"/></svg></button>
      <button class="tb" aria-label="草图属性" disabled><svg class="icon"><use href="#sketch"/></svg></button>
      <i class="sep"></i>
      <button class="tb" aria-label="创建要素" disabled><svg class="icon"><use href="#create"/></svg></button>
      <button class="more" aria-label="工具条选项"></button>
    </div>
  </div>

  <div class="toolrow">
    <div class="toolbar">
      <i class="grip"></i>
      <button class="tb" aria-label="放大"><svg class="icon"><use href="#zoomin"/></svg></button>
      <button class="tb" aria-label="缩小"><svg class="icon"><use href="#zoomout"/></svg></button>
      <button class="tb tb-on" aria-label="平移"><svg class="icon"><use href="#pan"/></svg></button>
      <button class="tb" aria-label="全图"><svg class="icon"><use href="#globe"/></svg></button>
      <i class="sep"></i>
      <button class="tb" aria-label="固定比例放大"><svg class="icon"><use href="#fixin"/></svg></button>
      <button class="tb" aria-label="固定比例缩小"><svg class="icon"><use href="#fixout"/></svg></button>
      <i class="sep"></i>
      <button class="tb" aria-label="后退" disabled><svg class="icon"><use href="#back"/></svg></button>
      <button class="tb" aria-label="前进" disabled><svg class="icon"><use href="#fwd"/></svg></button>
      <i class="sep"></i>
      <button class="tb" aria-label="选择要素" disabled><svg class="icon"><use href="#selfeat"/></svg></button>
      <button class="drop drop-off" aria-label="选择方式" disabled></button>
      <button class="tb" aria-label="清除选择" disabled><svg class="icon"><use href="#clearsel"/></svg></button>
      <button class="textbtn" disabled>设置可选图层(Y)...</button>
      <i class="sep"></i>
      <button class="tb" aria-label="选择元素"><svg class="icon"><use href="#arrow"/></svg></button>
      <i class="sep"></i>
      <button class="tb" aria-label="识别"><svg class="icon"><use href="#info"/></svg></button>
      <button class="tb" aria-label="超链接" disabled><svg class="icon"><use href="#bolt"/></svg></button>
      <button class="tb" aria-label="HTML 弹出窗口" disabled><svg class="icon"><use href="#popup"/></svg></button>
      <i class="sep"></i>
      <button class="tb" aria-label="测量" disabled><svg class="icon"><use href="#measure"/></svg></button>
      <i class="sep"></i>
      <button class="tb" aria-label="查找"><svg class="icon"><use href="#find"/></svg></button>
      <button class="tb" aria-label="查找路径"><svg class="icon"><use href="#route"/></svg></button>
      <button class="tb" aria-label="转到 XY"><svg class="icon"><use href="#xy"/></svg></button>
      <i class="sep"></i>
      <button class="tb" aria-label="时间滑块" disabled><svg class="icon"><use href="#time"/></svg></button>
      <i class="sep"></i>
      <button class="tb" aria-label="查看器窗口"><svg class="icon"><use href="#viewer"/></svg></button>
      <button class="more" aria-label="工具条选项"></button>
    </div>
    <div class="toolbar">
      <i class="grip"></i>
      <button class="tmenu">地理配准(G)</button>
      <i class="sep"></i>
      <span class="combo combo-geo"><select aria-label="配准图层" disabled><option></option></select></span>
      <button class="tb" aria-label="添加控制点" disabled><svg class="icon"><use href="#link"/></svg></button>
      <button class="tb" aria-label="自动配准" disabled><svg class="icon"><use href="#linkwand"/></svg></button>
      <button class="tb" aria-label="选择链接" disabled><svg class="icon"><use href="#linksel"/></svg></button>
      <button class="tb" aria-label="缩放至链接" disabled><svg class="icon"><use href="#linkzoom"/></svg></button>
      <button class="tb" aria-label="删除链接" disabled><svg class="icon"><use href="#linkdel"/></svg></button>
      <button class="tb" aria-label="查看器" disabled><svg class="icon"><use href="#table"/></svg></button>
      <button class="tb" aria-label="链接表" disabled><svg class="icon"><use href="#table2"/></svg></button>
      <button class="tb" aria-label="旋转" disabled><svg class="icon"><use href="#georot"/></svg></button>
      <button class="drop drop-off" aria-label="旋转选项" disabled></button>
      <input class="geoinput" type="text" aria-label="旋转角度">
      <button class="more" aria-label="工具条选项"></button>
    </div>
  </div>

  <main class="main">
    <section class="toc">
      <div class="panelhead panelhead-idle"><h2>内容列表</h2>
        <button class="mini" aria-label="自动隐藏"><svg><use href="#pin"/></svg></button><button class="mini" aria-label="关闭"><svg><use href="#close"/></svg></button></div>
      <div class="toctools">
        <button class="tb" aria-label="按绘制顺序列出"><svg class="icon"><use href="#l-order"/></svg></button>
        <button class="tb tb-on" aria-label="按源列出"><svg class="icon"><use href="#l-source"/></svg></button>
        <button class="tb" aria-label="按可见性列出"><svg class="icon"><use href="#l-vis"/></svg></button>
        <button class="tb" aria-label="按选择列出"><svg class="icon"><use href="#l-sel"/></svg></button>
        <i class="sep"></i>
        <button class="tb" aria-label="选项"><svg class="icon"><use href="#l-opt"/></svg></button>
      </div>
      <div class="tocbody"><svg class="icon"><use href="#layers"/></svg><span class="layersel">图层</span></div>
    </section>

    <section class="mapview">
      <div class="maprow">
        <div class="canvas"></div>
        <div class="vscroll"><button class="sa up" aria-label="向上"></button><div class="thumb thumb-full"></div><button class="sa down" aria-label="向下"></button></div>
      </div>
      <div class="mapbar">
        <button class="vb vb-on" aria-label="数据视图"><svg><use href="#v-data"/></svg></button>
        <button class="vb" aria-label="布局视图"><svg><use href="#v-layout"/></svg></button>
        <i class="sep"></i>
        <button class="vb" aria-label="刷新"><svg><use href="#refresh"/></svg></button>
        <button class="vb" aria-label="暂停绘制"><svg><use href="#pause"/></svg></button>
        <div class="hscroll"><button class="sa left" aria-label="向左"></button><div class="thumb thumb-full"></div><button class="sa right" aria-label="向右"></button></div>
      </div>
    </section>

    <section class="catalog">
      <div class="panelhead"><h2>目录</h2>
        <button class="mini" aria-label="自动隐藏"><svg><use href="#pin"/></svg></button><button class="mini" aria-label="关闭"><svg><use href="#close"/></svg></button></div>
      <div class="cattools">
        <button class="tb" aria-label="后退"><svg class="icon"><use href="#c-back"/></svg></button>
        <button class="drop drop-wide" aria-label="历史"></button>
        <button class="tb" aria-label="前进"><svg class="icon"><use href="#c-fwd"/></svg></button>
        <button class="tb" aria-label="向上一级"><svg class="icon"><use href="#c-up"/></svg></button>
        <button class="tb" aria-label="主目录"><svg class="icon"><use href="#c-home"/></svg></button>
        <button class="tb" aria-label="默认地理数据库"><svg class="icon"><use href="#c-db"/></svg></button>
        <i class="sep sep-dark"></i>
        <button class="tb tb-gap" aria-label="视图"><svg class="icon"><use href="#c-view"/></svg></button>
        <button class="drop drop-wide drop-off" aria-label="视图选项"></button>
        <i class="sep sep-dark"></i>
        <button class="tb tb-gap" aria-label="连接到文件夹"><svg class="icon"><use href="#c-conn"/></svg></button>
        <i class="sep sep-dark"></i>
        <button class="chev" aria-label="更多"><svg viewBox="0 0 10 8"><path d="M1 1l3 3-3 3M5.500 1l3 3-3 3" fill="none" stroke="#5a5ab0" stroke-width="1.200"/></svg></button>
      </div>
      <div class="locrow">
        <label for="loc">位置:</label>
        <span class="locbox"><svg class="icon"><use href="#toolset"/></svg><select id="loc"><option>条件分析</option></select></span>
      </div>
      <div class="treebox">
        <div class="treerow">
          <ul class="tree">
            <li class="l3"><b class="tg"></b><svg class="icon"><use href="#toolset"/></svg><span>表面分析</span></li>
            <li class="l3"><b class="tg"></b><svg class="icon"><use href="#toolset"/></svg><span>插值分析</span></li>
            <li class="l3"><b class="tg"></b><svg class="icon"><use href="#toolset"/></svg><span>地图代数</span></li>
            <li class="l3"><b class="tg"></b><svg class="icon"><use href="#toolset"/></svg><span>地下水分析</span></li>
            <li class="l3"><b class="tg"></b><svg class="icon"><use href="#toolset"/></svg><span>叠加分析</span></li>
            <li class="l3"><b class="tg"></b><svg class="icon"><use href="#toolset"/></svg><span>多元分析</span></li>
            <li class="l3"><b class="tg"></b><svg class="icon"><use href="#toolset"/></svg><span>局部分析</span></li>
            <li class="l3"><b class="tg"></b><svg class="icon"><use href="#toolset"/></svg><span>距离</span></li>
            <li class="l3"><b class="tg"></b><svg class="icon"><use href="#toolset"/></svg><span>邻域分析</span></li>
            <li class="l3"><b class="tg"></b><svg class="icon"><use href="#toolset"/></svg><span>密度分析</span></li>
            <li class="l3"><b class="tg"></b><svg class="icon"><use href="#toolset"/></svg><span>区域分析</span></li>
            <li class="l3"><b class="tg"></b><svg class="icon"><use href="#toolset"/></svg><span>数学分析</span></li>
            <li class="l3"><b class="tg"></b><svg class="icon"><use href="#toolset"/></svg><span>水文分析</span></li>
            <li class="l3"><b class="tg"></b><svg class="icon"><use href="#toolset"/></svg><span>太阳辐射</span></li>
            <li class="l3"><b class="tg"></b><svg class="icon"><use href="#toolset"/></svg><span>提取分析</span></li>
            <li class="l3"><b class="tg tg-open"></b><svg class="icon"><use href="#toolset"/></svg><span class="sel">条件分析</span></li>
            <li class="l4"><svg class="icon"><use href="#hammer"/></svg><span>设为空函数</span></li>
            <li class="l4"><svg class="icon"><use href="#hammer"/></svg><span>条件函数</span></li>
            <li class="l4"><svg class="icon"><use href="#hammer"/></svg><span>选取函数</span></li>
            <li class="l3"><b class="tg"></b><svg class="icon"><use href="#toolset"/></svg><span>影像分割和分类</span></li>
            <li class="l3"><b class="tg"></b><svg class="icon"><use href="#toolset"/></svg><span>栅格创建</span></li>
            <li class="l3"><b class="tg"></b><svg class="icon"><use href="#toolset"/></svg><span>栅格综合</span></li>
            <li class="l3"><b class="tg"></b><svg class="icon"><use href="#toolset"/></svg><span>重分类</span></li>
            <li class="l2"><b class="tg"></b><svg class="icon"><use href="#toolbox"/></svg><span>Spatial Statistics Tools.tbx</span></li>
            <li class="l2"><b class="tg"></b><svg class="icon"><use href="#toolbox"/></svg><span>Tracking Analyst Tools.tbx</span></li>
            <li><b class="tg"></b><svg class="icon"><use href="#f-server"/></svg><span>数据库服务器</span></li>
            <li><b class="tg"></b><svg class="icon"><use href="#f-conn"/></svg><span>数据库连接</span></li>
            <li><b class="tg"></b><svg class="icon"><use href="#f-gis"/></svg><span>GIS 服务器</span></li>
            <li><b class="tg"></b><svg class="icon"><use href="#f-gis"/></svg><span>我托管的服务</span></li>
          </ul>
          <div class="vscroll"><button class="sa up" aria-label="向上"></button><div class="space space-a"></div><div class="thumb thumb-tree"></div><div class="space space-b"></div><button class="sa down" aria-label="向下"></button></div>
        </div>
        <div class="hscroll"><button class="sa left" aria-label="向左"></button><div class="space space-g"></div><div class="thumb thumb-h"></div><div class="space space-h"></div><button class="sa right" aria-label="向右"></button></div>
        <div class="redbox"></div>
      </div>
      <div class="tabs">
        <button class="tab tab-on"><svg class="icon"><use href="#catalog"/></svg>目录</button>
        <button class="tab"><svg class="icon"><use href="#search"/></svg>搜索</button>
      </div>
    </section>
  </main>

  <footer class="status"><span>978.559</span><span>951.973</span><span class="unit">未知单位</span></footer>
  <div class="ime"><span class="ime-en">En</span><span class="ime-p">，</span><span class="ime-h">半</span><svg><use href="#shirt"/></svg></div>
  <div class="mark">https://blog.csdn.net/Demosenli</div>
</div>
</body>
</html>
```
FILE: styles.css
```css
* { box-sizing: border-box; }
body { margin: 0; }
.sprite { position: absolute; width: 0; height: 0; }
button, select, input { font: inherit; color: inherit; margin: 0; padding: 0; border: 0; background: none; border-radius: 0; }
select { appearance: none; opacity: 1; }
h1, h2 { margin: 0; font: inherit; }
ul { margin: 0; padding: 0; list-style: none; }
svg { display: block; flex: none; }

.app {
  position: relative;
  display: flex;
  flex-direction: column;
  height: 100vh;
  overflow: hidden;
  background: linear-gradient(90deg, #f0f0f0, #fafafa);
  font: 12px/16px "Noto Sans", "Noto Sans CJK SC", sans-serif;
  color: #000;
}
.icon { width: 16px; height: 16px; }

/* title bar */
.titlebar {
  display: flex;
  align-items: center;
  height: 22px;
  flex: none;
  gap: 5px;
  border-bottom: 1px solid #1c2a40;
  box-shadow: inset 0 -1px #9db4d0;
  background:
    radial-gradient(ellipse 85px 26px at 62px 11px, rgba(190, 208, 228, .85) 40%, rgba(190, 208, 228, 0)),
    linear-gradient(90deg, transparent 120px, rgba(14, 38, 72, .55) 135px, rgba(14, 38, 72, .55) 190px, transparent 200px),
    linear-gradient(90deg, transparent 1170px, rgba(12, 28, 54, .6) 1185px, rgba(12, 28, 54, .6) 1250px, transparent 1262px),
    linear-gradient(100deg, #5d82ad 0, #2f5f99 140px, #174a87 220px, #1c4c89 330px, #265993 400px, #1f538f 600px, #2d639f 720px, #1d4f8d 900px, #174680 1100px, #6788ad 100%);
}
.title-text { flex: 1; }
.winbtns { display: flex; align-self: flex-start; height: 18px; margin-right: 3px; border: 1px solid #c5d0dd; border-top: 0; border-radius: 0 0 5px 5px; overflow: hidden; background: #24344a; gap: 1px; }
.winbtn { width: 28px; display: flex; align-items: center; justify-content: center; background: linear-gradient(#8f9bab 0 45%, #4c5a6e 50%, #74849a); }
.winbtn svg { width: 16px; height: 12px; }
.winbtn + .winbtn { width: 26px; }
.winbtn.winclose { width: 46px; background: linear-gradient(#d08c7e 0 40%, #a93019 50%, #cb5f42); }

/* menu and toolbars */
.menubar { display: flex; gap: 1px; height: 27px; flex: none; padding-left: 4px; }
.menubar button { padding: 0 8px; }
.toolrow { display: flex; gap: 2px; height: 27px; flex: none; align-items: flex-start; }
.toolbar { display: flex; align-items: center; height: 25px; padding-left: 3px; border-radius: 3px; background: linear-gradient(#fcfcfc, #f0f0f0); }
.grip { width: 3px; height: 15px; margin: 0 2px; flex: none; background: repeating-linear-gradient(#b5b5b5 0 2px, transparent 2px 4px); }
.tb { display: flex; align-items: center; justify-content: center; width: 22px; height: 22px; flex: none; }
.tb-on { border: 1px solid #3399ff; background: #dfeaf6; }
.sep { width: 6px; height: 15px; flex: none; background: linear-gradient(#b4b4b4, #b4b4b4) 2px 0 / 1px 100% no-repeat; }
.sep-dark { background-image: linear-gradient(#888, #888); height: 18px; }
.drop { width: 10px; height: 22px; flex: none; display: flex; align-items: center; justify-content: center; }
.drop::before, .tmenu::after { content: ""; border: 3px solid transparent; border-top-color: #000; border-bottom: 0; }
.drop-wide { width: 15px; }
.drop-wide::before { border-width: 4px; border-bottom: 0; }
.drop-off::before { border-top-color: #909090; }
.more { align-self: stretch; width: 11px; margin-left: 1px; display: flex; flex-direction: column; align-items: center; justify-content: flex-end; padding-bottom: 3px; gap: 1px; background: linear-gradient(#f0f0f0, #999); }
.more::before { content: ""; width: 6px; height: 1px; background: #000; box-shadow: 1px 1px #fff; }
.more::after { content: ""; border: 3px solid transparent; border-top-color: #000; border-bottom: 0; }
.tmenu { display: flex; align-items: center; gap: 3px; height: 22px; margin: 0 4px; white-space: nowrap; }
.textbtn { color: #a3a3a3; padding: 0 4px 0 5px; height: 22px; white-space: nowrap; }
.combo { position: relative; height: 20px; margin: 0 6px 0 1px; border: 1px solid #b2b2b2; border-radius: 2px; background: #f3f3f3; }
.combo select { width: 100%; height: 100%; border: 2px solid #fff; }
.combo::after, .locbox::after { content: ""; position: absolute; right: 4px; top: 8px; border: 4px solid transparent; border-top-color: #aaa; border-bottom: 0; }
.combo-scale { width: 148px; }
.combo-geo { width: 179px; margin: 0; border-color: #a8b3b3; }
.combo-geo select { border: 0; }
.geoinput { width: 74px; height: 18px; margin: 0 4px; border: 1px solid #555; background: #fff; }

/* main panels */
.main { display: flex; flex: 1; min-height: 0; }
.toc { width: 254px; flex: none; display: flex; flex-direction: column; margin-bottom: 2px; }
.panelhead { display: flex; align-items: center; gap: 6px; height: 22px; flex: none; padding: 0 4px; background: linear-gradient(90deg, #99b4d1, #b9d1ea); }
.panelhead h2 { flex: 1; }
.panelhead-idle { background: linear-gradient(90deg, #bfcddb, #d7e4f2); color: #434e54; }
.mini svg { width: 10px; height: 10px; color: #111; }
.toctools { display: flex; align-items: center; height: 26px; flex: none; padding-left: 4px; }
.tocbody { flex: 1; display: flex; align-items: flex-start; gap: 3px; padding: 1px 0 0 23px; border: 1px solid #828790; background: #fff; }
.tocbody .icon { margin-top: 2px; }
.layersel { background: #3399ff; color: #fff; font-weight: bold; padding: 2px; }

.mapview { flex: 1; min-width: 0; display: flex; flex-direction: column; margin: 1px 6px 3px 6px; padding-right: 1px; border: solid #6a6a6a; border-width: 1px 0 0 1px; background: #f0f0f0; }
.maprow { display: flex; flex: 1; min-height: 0; }
.canvas { flex: 1; background: #fff; border-right: 1px solid #e3e3e3; border-bottom: 1px solid #e3e3e3; }
.mapbar { display: flex; height: 17px; flex: none; align-items: center; }
.mapbar .hscroll { margin-right: 17px; }
.vb { width: 17px; height: 15px; display: flex; align-items: center; justify-content: center; }
.vb svg { width: 10px; height: 10px; }
.vb-on { border: 1px solid #555; border-radius: 2px; background: #e3e3e3; }

/* scroll bars */
.vscroll { display: flex; flex-direction: column; width: 15px; flex: none; background: #efefef; }
.hscroll { display: flex; height: 15px; flex: 1; background: #efefef; }
.sa { width: 15px; height: 17px; flex: none; display: flex; align-items: center; justify-content: center; }
.hscroll .sa { width: 17px; height: 15px; }
.sa::before { content: ""; border: 4px solid transparent; }
.up::before { border-top: 0; border-bottom-color: #333; }
.down::before { border-bottom: 0; border-top-color: #333; }
.left::before { border-left: 0; border-right-color: #333; }
.right::before { border-right: 0; border-left-color: #333; }
.thumb { border: 1px solid #979797; border-radius: 2px; display: flex; align-items: center; justify-content: center; }
.vscroll .thumb { background: linear-gradient(90deg, #f5f5f5 0 45%, #dadadc 50%, #bcbcc0); }
.hscroll .thumb { background: linear-gradient(#f5f5f5 0 45%, #dadadc 50%, #bcbcc0); }
.thumb::before { content: ""; width: 8px; height: 7px; }
.vscroll .thumb::before { background: repeating-linear-gradient(#555 0 1px, #eee 1px 3px); }
.hscroll .thumb::before { background: repeating-linear-gradient(90deg, #555 0 1px, #eee 1px 3px); }
.thumb-full { flex: 1; }
.space-a { flex: 207; }
.thumb-tree { flex: 220; }
.space-b { flex: 24; }
.space-g { flex: 6; }
.thumb-h { flex: 88; }
.space-h { flex: 91; }

/* catalog panel */
.catalog { width: 242px; flex: none; display: flex; flex-direction: column; }
.cattools { display: flex; align-items: center; height: 23px; margin-top: 1px; flex: none; padding-left: 4px; background: linear-gradient(#fafaff, #cfd6ea); }
.cattools .tb { margin-right: 1px; }
.cattools .tb-gap { margin-left: 3px; }
.chev { margin-left: auto; padding: 0 3px 8px 0; }
.chev svg { width: 10px; height: 8px; }
.locrow { display: flex; align-items: center; height: 27px; flex: none; padding-left: 3px; }
.locrow label { width: 51px; }
.locbox { position: relative; display: flex; align-items: center; flex: 1; height: 22px; margin-right: 4px; padding-left: 2px; gap: 4px; border: 1px solid #e2e3ea; background: #fff; }
.locbox select { flex: 1; }
.locbox::after { border-top-color: #000; pointer-events: none; }
.treebox { position: relative; flex: 1; min-height: 0; display: flex; flex-direction: column; margin: 0 4px 0 1px; padding-right: 1px; border: 1px solid #696969; border-right-color: #e3e3e3; border-bottom-color: #e3e3e3; background: #efefef; }
.treerow { display: flex; flex: 1; min-height: 0; }
.tree { flex: 1; min-width: 0; overflow: hidden; background: #fff; }
.tree li { display: flex; align-items: center; height: 17px; margin-left: -6px; white-space: nowrap; }
.tree .l2 { padding-left: 38px; }
.tree .l3 { padding-left: 57px; }
.tree .l4 { padding-left: 91px; }
.tree .icon { margin-right: 4px; }
.tree span { padding: 0 1px; }
.tree .sel { background: #3399ff; color: #fff; outline: 1px dotted #333; outline-offset: -1px; }
.tg { width: 9px; height: 9px; margin-right: 6px; flex: none; border: 1px solid #919191; border-radius: 1px; background: linear-gradient(#27509c, #27509c) center / 5px 1px no-repeat, linear-gradient(#27509c, #27509c) center / 1px 5px no-repeat, #f5f5f5; }
.tg-open { background: linear-gradient(#27509c, #27509c) center / 5px 1px no-repeat, #f5f5f5; }
.treebox .hscroll { flex: none; height: 16px; margin-right: 16px; align-items: stretch; }
.redbox { position: absolute; left: 1px; top: 253px; width: 222px; height: 71px; border: 3px solid #f00; box-shadow: 2px 2px 5px rgba(0, 0, 0, .6), inset 2px 2px 5px rgba(0, 0, 0, .5); pointer-events: none; }
.tabs { display: flex; height: 28px; flex: none; padding: 5px 0 4px 4px; }
.tab { display: flex; align-items: center; gap: 3px; padding: 0 4px; border: 1px solid #a0a0a0; border-top: 0; border-radius: 0 0 4px 4px; color: #666; background: #f2f2f2; }
.tab-on { padding: 0 2px; color: #000; background: #fff; outline: 1px dotted #000; outline-offset: -3px; }

/* status bar and overlays */
.status { display: flex; align-items: center; justify-content: flex-end; gap: 8px; height: 20px; flex: none; padding-right: 132px; background: #f0f0f0; border-top: 1px solid #e3e3e3; }
.unit { margin-left: -4px; }
.ime { position: absolute; right: 0; bottom: 0; display: flex; align-items: center; width: 110px; height: 23px; padding-left: 5px; border-radius: 5px 0 0 5px; overflow: hidden; background: #35373a; color: #ddd; font-size: 17px; }
.ime-en { width: 37px; padding-top: 5px; font-size: 22px; line-height: 22px; color: #0c9ce8; }
.ime-p { width: 17px; }
.ime-h { width: 26px; }
.ime svg { width: 20px; height: 18px; }
.mark { position: absolute; right: 8px; bottom: 9px; font: 16px/18px "Liberation Sans", sans-serif; color: rgba(255, 255, 255, .6); text-shadow: 0 0 2px rgba(90, 90, 90, .6); pointer-events: none; }
```
